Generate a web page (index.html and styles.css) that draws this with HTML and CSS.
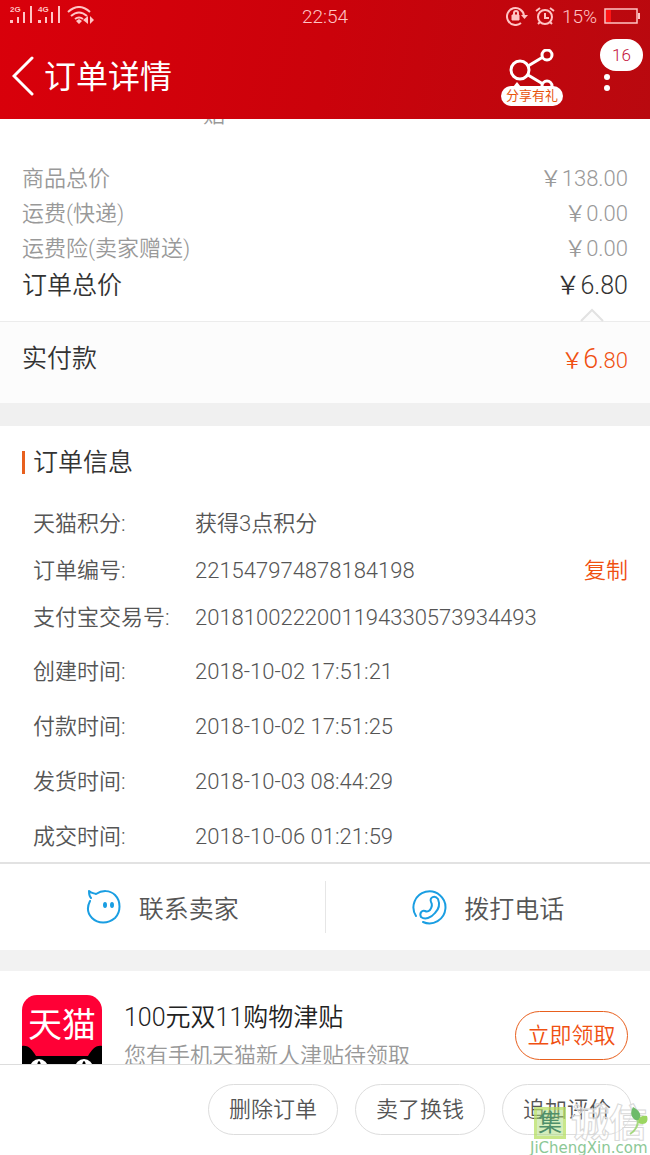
FILE: index.html
```html
<!DOCTYPE html>
<html lang="zh-CN">
<head>
  <title>订单详情</title>
  <meta charset="utf-8">
  <meta name="viewport" content="width=device-width, initial-scale=1">
  <link rel="stylesheet" href="styles.css">
</head>

<body>

<header class="top">
  <div class="status">
    <div class="status-left">
      <svg width="86" height="20" viewBox="0 0 86 20" fill="#ffc4c4">
        <text x="0" y="6" class="net">2G</text>
        <path d="M0 14h3v3H0zM7 11h2v6H7zM13 6h2v11h-2zM20 0h2v17h-2z"/>
        <text x="28" y="6" class="net">4G</text>
        <path d="M28 14h3v3h-3zM35 11h2v6h-2zM41 6h2v11h-2zM48 0h2v17h-2z"/>
        <g fill="none" stroke="#ffc4c4" stroke-width="2">
          <path d="M58 6q11-10 22 0M61 10q8-7 16 0M65 13q4-3 8 0"/>
        </g>
        <path d="M66 15l3-2 3 2-3 3zM78 10v8l-5-4zM80 10v8l4-4z"/>
      </svg>
    </div>
    <div class="clock">22:54</div>
    <div class="status-right">
      <svg width="22" height="20" viewBox="0 0 22 20" fill="none" stroke="#ffc4c4" stroke-width="2">
        <path d="M15 17a8.500 8.500 0 1 1 3-7"/>
        <path d="M8 9V7a2 2 0 0 1 4 0v2"/>
        <path d="M6 9h7v5H6z" fill="#ffc4c4" stroke-width="1"/>
        <path d="M15 9h7l-3.500 4z" fill="#ffc4c4" stroke="none"/>
      </svg>
      <svg width="20" height="20" viewBox="0 0 20 20" fill="none" stroke="#ffc4c4" stroke-width="2">
        <circle cx="10" cy="11" r="7"/>
        <path d="M10 7v5h4M1 5l4-3M19 5l-4-3M5 16l-2 2M15 16l2 2"/>
      </svg>
      <span>15%</span>
      <svg width="36" height="16" viewBox="0 0 36 16">
        <path d="M1 1h32v14H1z" fill="none" stroke="#ffc4c4" stroke-width="1.500"/>
        <path d="M2 2h5v12H2z" fill="#ff1414"/>
        <path d="M34 5h2v6h-2z" fill="#ffc4c4"/>
      </svg>
    </div>
  </div>

  <div class="title-bar">
    <button class="back" aria-label="返回">
      <svg width="22" height="40" viewBox="0 0 22 40" fill="none" stroke="#fff" stroke-width="3" stroke-linecap="round">
        <path d="M20 2L2 20l18 18"/>
      </svg>
    </button>
    <h1>订单详情</h1>
    <button class="share" aria-label="分享有礼">
      <svg width="46" height="54" viewBox="0 0 46 54" fill="none" stroke="#fff" stroke-width="3">
        <circle cx="11" cy="21" r="9"/>
        <circle cx="38" cy="6" r="5"/>
        <circle cx="38" cy="37" r="5"/>
        <path d="M19 17l15-9M19 26l15 9"/>
        <path d="M4 38l4-5 4 5z" fill="#fff" stroke="none"/>
      </svg>
      <span class="share-tag">分享有礼</span>
    </button>
    <button class="more" aria-label="更多">
      <svg width="8" height="30" viewBox="0 0 8 30" fill="#fff">
        <circle cx="4" cy="16" r="3"/><circle cx="4" cy="27" r="3"/>
      </svg>
      <span class="badge">16</span>
    </button>
  </div>
</header>

<main>
  <section class="prices">
    <div class="cut-line">贴</div>
    <div class="price-row"><span>商品总价</span><span>￥138.00</span></div>
    <div class="price-row"><span>运费(快递)</span><span>￥0.00</span></div>
    <div class="price-row"><span>运费险(卖家赠送)</span><span>￥0.00</span></div>
    <div class="price-row total"><span>订单总价</span><span>￥6.80</span></div>
  </section>
  <section class="paid">
    <!-- little arrow on the divider -->
    <svg class="arrow" width="26" height="14" viewBox="0 0 26 14">
      <path d="M2 13L13 2l11 11" fill="#fcfcfc" stroke="#e2e2e2" stroke-width="2"/>
    </svg>
    <span>实付款</span>
    <span class="paid-sum">￥<b>6</b>.80</span>
  </section>

  <section class="info">
    <h2>订单信息</h2>
    <dl>
      <div><dt>天猫积分:</dt><dd>获得3点积分</dd></div>
      <div><dt>订单编号:</dt><dd>221547974878184198</dd><button class="copy">复制</button></div>
      <div><dt>支付宝交易号:</dt><dd>2018100222001194330573934493</dd></div>
    </dl>
    <dl class="times">
      <div><dt>创建时间:</dt><dd>2018-10-02 17:51:21</dd></div>
      <div><dt>付款时间:</dt><dd>2018-10-02 17:51:25</dd></div>
      <div><dt>发货时间:</dt><dd>2018-10-03 08:44:29</dd></div>
      <div><dt>成交时间:</dt><dd>2018-10-06 01:21:59</dd></div>
    </dl>
  </section>

  <section class="contact">
    <button>
      <svg width="36" height="36" viewBox="0 0 36 36" fill="none" stroke="#1a9ee2" stroke-width="2" stroke-linecap="round" stroke-linejoin="round">
        <path d="M4 12C1 18 1 24 6 29c6 6 16 6 23 0 6-6 6-17 0-23C24 1 16 1 10 5 7 4 5 4 3 2c0 3 0 5 2 7"/>
        <ellipse cx="19" cy="16" rx="2" ry="3" fill="#1a9ee2" stroke="none"/>
        <ellipse cx="26" cy="16" rx="2" ry="3" fill="#1a9ee2" stroke="none"/>
      </svg>
      联系卖家
    </button>
    <button>
      <svg width="36" height="36" viewBox="0 0 36 36" fill="none" stroke="#1a9ee2" stroke-width="2" stroke-linecap="round" stroke-linejoin="round">
        <path d="M5 27A16 16 0 1 1 12 33"/>
        <path d="M20 13c-2-5 4-7 7-3 2 5 1 10-3 14-4 5-10 7-14 4-2-4 1-7 4-6 2 1 3 1 5-1 2-3 3-5 1-8z"/>
      </svg>
      拨打电话
    </button>
  </section>

  <section class="promo">
    <svg class="tmall" width="80" height="80" viewBox="0 0 80 80">
      <rect width="80" height="80" rx="15" fill="#ff0036"/>
      <path d="M0 51c7-1 10 4 14 10h52c4-6 7-11 14-10v29H0z" fill="#000"/>
      <ellipse cx="17" cy="73" rx="9" ry="9" fill="#fff"/>
      <ellipse cx="62" cy="73" rx="9" ry="9" fill="#fff"/>
      <ellipse cx="17" cy="73" rx="2" ry="7"/>
      <ellipse cx="62" cy="73" rx="2" ry="7"/>
      <text x="40" y="42" text-anchor="middle" class="tmall-text">天猫</text>
    </svg>
    <div class="promo-text">
      <h3>100元双11购物津贴</h3>
      <p>您有手机天猫新人津贴待领取</p>
    </div>
    <button class="get">立即领取</button>
  </section>
</main>

<footer>
  <button>删除订单</button>
  <button>卖了换钱</button>
  <button>追加评价</button>
</footer>

<div class="watermark">
  <div class="mark-top">
    <span class="mark-box">集</span>
    <span class="mark-name">诚信</span>
    <svg class="leaf" width="20" height="30" viewBox="0 0 20 30">
      <path d="M4 1c7 4 9 8 6 14C3 14 0 8 4 1z" fill="#6dbb6a"/>
      <path d="M9 17c0-6 4-8 9-7 2 6-2 10-9 7z" fill="#9bd661"/>
      <path d="M9 14q0 9-8 14" fill="none" stroke="#a5d880" stroke-width="2"/>
    </svg>
  </div>
  <div class="mark-url">JiChengXin.com</div>
</div>

</body>
</html>
```
FILE: styles.css
```css
* {
  box-sizing: border-box;
}

body {
  margin: 0;
  height: 100vh;
  display: flex;
  flex-direction: column;
  font-family: Roboto, "Noto Sans CJK SC", sans-serif;
  font-weight: 350;
  font-size: 22px;
  color: #555;
  background-color: #fff;
}

h1, h2, h3, p, dl, dd {
  margin: 0;
  font-weight: inherit;
}

button {
  font: inherit;
  color: inherit;
  background: none;
  border: 0;
  padding: 0;
}

svg {
  display: block;
  flex: none;
}

/* Red header */
.top {
  flex: none;
  background: linear-gradient(100deg, #d9000b, #cb020b 50%, #b9090f);
  color: #fff;
}

.status {
  display: grid;
  grid-template-columns: 1fr auto 1fr;
  align-items: center;
  height: 32px;
  padding: 0 10px;
  font-size: 19px;
  color: #ffc4c4;
}

.status-right {
  display: flex;
  justify-content: flex-end;
  align-items: center;
  gap: 7px;
}

.net {
  font: bold 8px "Liberation Sans", sans-serif;
}

.title-bar {
  display: flex;
  align-items: center;
  height: 87px;
  padding: 0 39px 0 12px;
}

.title-bar h1 {
  flex: 1;
  margin-left: 10px;
  padding-bottom: 4px;
  font-size: 32px;
  font-weight: 400;
}

.share, .more {
  position: relative;
}

.share {
  margin-right: 48px;
}

.share-tag {
  position: absolute;
  top: 37px;
  left: -8px;
  width: 62px;
  border-radius: 11px;
  background-color: #fff;
  color: #e8540c;
  font-size: 13px;
  font-weight: 400;
  line-height: 20px;
  text-align: center;
}

.badge {
  position: absolute;
  top: -22px;
  left: -3px;
  width: 43px;
  border-radius: 16px;
  background-color: #fff;
  color: #c4123c;
  font-size: 17px;
  line-height: 32px;
}

/* Order content */
main {
  flex: 1;
  min-height: 0;
  overflow: hidden;
}

.prices {
  padding-bottom: 16px;
  border-bottom: 1px solid #ececec;
}

.cut-line {
  display: flex;
  align-items: flex-end;
  height: 8px;
  margin-bottom: 34px;
  padding-left: 203px;
  overflow: hidden;
  line-height: 24px;
  color: #999;
}

.price-row {
  display: flex;
  justify-content: space-between;
  padding: 0 22px;
  line-height: 35px;
  color: #999;
}

.total {
  font-size: 25px;
  line-height: 39px;
  color: #333;
}

.paid {
  position: relative;
  display: flex;
  justify-content: space-between;
  height: 81px;
  padding: 18px 22px 0;
  background-color: #fcfcfc;
  font-size: 25px;
  line-height: 38px;
  color: #333;
}

.arrow {
  position: absolute;
  top: -14px;
  right: 45px;
}

.paid-sum {
  font-size: 22px;
  color: #f05011;
}

.paid-sum b {
  font-size: 27px;
  font-weight: inherit;
}

.info {
  padding: 25px 22px 0;
  border-top: 23px solid #f0f0f0;
}

.info h2 {
  padding-left: 8px;
  border-left: 3px solid #e8601e;
  margin-bottom: 26px;
  font-size: 25px;
  line-height: 23px;
  color: #333;
}

.info dl div {
  display: flex;
  padding-left: 11px;
  line-height: 47px;
}

.info dt {
  width: 162px;
}

.info dd {
  flex: 1;
}

.info .times {
  padding-top: 3px;
}

/* last row sits tight above the contact bar */
.info .times div {
  line-height: 55px;
}

.info .times div:last-child {
  height: 53px;
}

.copy {
  color: #f05011;
}

.contact {
  display: flex;
  padding: 17px 0;
  border-top: 2px solid #e2e2e2;
  border-bottom: 21px solid #f2f2f2;
}

.contact button {
  flex: 1;
  display: flex;
  justify-content: center;
  align-items: center;
  gap: 17px;
  height: 52px;
  font-size: 25px;
}

.contact button + button {
  border-left: 1px solid #e6e6e6;
}

.promo {
  display: flex;
  align-items: flex-start;
  padding: 24px 22px;
}

.tmall-text {
  fill: #fff;
  font-size: 34px;
  font-weight: 400;
}

.promo-text {
  flex: 1;
  margin-left: 22px;
}

.promo h3 {
  font-size: 25px;
  line-height: 46px;
  color: #222;
}

.promo p {
  line-height: 30px;
  color: #999;
}

.get {
  width: 113px;
  margin-top: 16px;
  border: 1px solid #e8601e;
  border-radius: 25px;
  line-height: 47px;
  color: #f05011;
}

/* Bottom buttons */
footer {
  flex: none;
  display: flex;
  justify-content: flex-end;
  gap: 17px;
  padding: 19px 18px 20px;
  border-top: 1px solid #ddd;
}

footer button {
  width: 130px;
  border: 1px solid #ddd;
  border-radius: 26px;
  line-height: 49px;
}

/* Site mark over the corner */
.watermark {
  position: absolute;
  right: 0;
  bottom: 0;
  width: 120px;
  pointer-events: none;
}

.mark-top {
  display: flex;
  align-items: center;
  gap: 5px;
}

.mark-box {
  margin-left: 4px;
  border: 3px solid rgba(190, 225, 90, 0.5);
  background-color: rgba(170, 220, 120, 0.5);
  color: #4f8f6a;
  font-size: 24px;
  font-weight: 400;
  line-height: 26px;
  padding: 0 1px;
}

.mark-name {
  color: rgba(255, 255, 255, 0.5);
  font-size: 38px;
  font-weight: 700;
  line-height: 36px;
  -webkit-text-stroke: 1px #d8d8d8;
}

.leaf {
  position: absolute;
  top: 1px;
  right: 1px;
}

.mark-url {
  color: #8cc896;
  font-family: "DejaVu Sans", sans-serif;
  font-size: 15px;
  font-weight: 400;
  line-height: 14px;
}
```
